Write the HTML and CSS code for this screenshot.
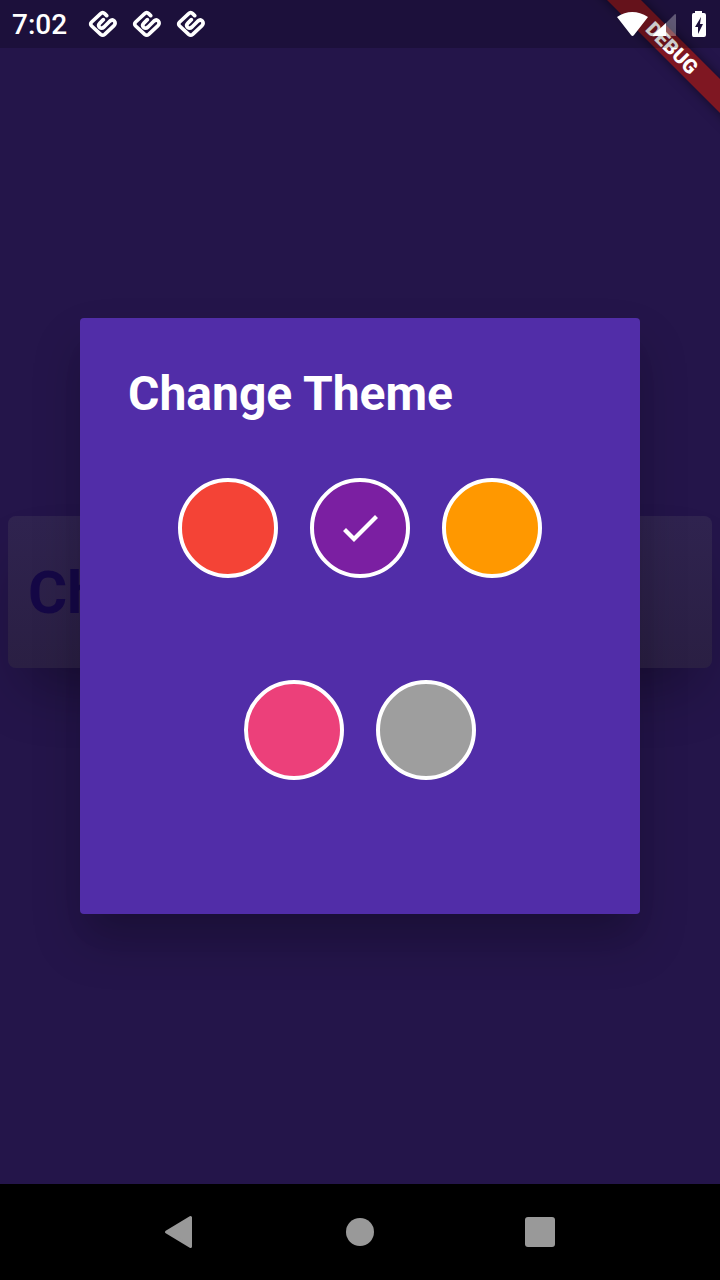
FILE: index.html
```html
<!DOCTYPE html>
<html lang="en">
<head>
<meta charset="utf-8">
<meta name="viewport" content="width=device-width, initial-scale=1">
<title>Change Theme</title>
<link rel="stylesheet" href="styles.css">
</head>
<body>
<svg class="symbols" aria-hidden="true">
  <symbol id="diamond" viewBox="0 0 90 84">
    <path d="M56 17 L50 11 Q44 5 38 11 L11 36 Q5 42 11 48 L38 73 Q44 78 50 73 L78 47 Q84 40 79 33 Q73 27 66 33 L48 51 Q41 57 35 52 Q29 46 35 40 L46 29" fill="none" stroke="#fff" stroke-width="11" stroke-linejoin="round" stroke-linecap="round"/>
  </symbol>
</svg>
<div class="screen">
  <main class="app">
    <section class="card"><h1 class="card-title">Change Theme</h1></section>
    <div class="debug-banner">DEBUG</div>
    <div class="overlay">
      <form class="dialog" role="dialog" aria-labelledby="dialog-title">
        <h2 class="dialog-title" id="dialog-title">Change Theme</h2>
        <div class="swatches">
          <input class="swatch red" type="radio" name="theme" aria-label="Red">
          <input class="swatch purple" type="radio" name="theme" aria-label="Purple" checked>
          <input class="swatch orange" type="radio" name="theme" aria-label="Orange">
          <input class="swatch pink" type="radio" name="theme" aria-label="Pink">
          <input class="swatch grey" type="radio" name="theme" aria-label="Grey">
        </div>
      </form>
    </div>
    <header class="status-bar">
      <span class="clock">7:02</span>
      <div class="notifications">
        <svg width="30" height="28"><use href="#diamond"/></svg>
        <svg width="30" height="28"><use href="#diamond"/></svg>
        <svg width="30" height="28"><use href="#diamond"/></svg>
      </div>
      <svg class="system" width="90" height="28" viewBox="0 0 90 28" fill="#fff" aria-hidden="true">
        <path d="M0 7 Q15 -3 31 7 L17 25 Q15.500 27 14 25 Z"/>
        <path d="M58 4 Q59 4 59 5 V26 H36 Z" fill-opacity=".3"/>
        <path d="M49 13 V26 H37 Q35 26 37 24 Z"/>
        <path fill-rule="evenodd" d="M78 1 H85 V3 H87 Q89 3 89 5 V25 Q89 27 87 27 H76.500 Q75 27 75 25 V5 Q75 3 76.500 3 H78 Z M84 7 L78 17 H81 V24 L86 14 H83 Z"/>
      </svg>
    </header>
  </main>
  <nav class="nav-bar">
    <button class="nav-button" aria-label="Back"><svg width="32" height="34" viewBox="0 0 32 34"><path d="M2.500 17 L26.500 2.500 V31.500 Z" fill="#999" stroke="#999" stroke-width="3" stroke-linejoin="round"/></svg></button>
    <button class="nav-button" aria-label="Home"><svg width="28" height="28"><circle cx="14" cy="14" r="14" fill="#999"/></svg></button>
    <button class="nav-button" aria-label="Recents"><svg width="30" height="30"><rect width="30" height="30" rx="3" fill="#999"/></svg></button>
  </nav>
</div>
</body>
</html>
```
FILE: styles.css
```css
* { box-sizing: border-box; }
body { margin: 0; background: #000; font-family: Roboto, "Liberation Sans", sans-serif; }
.symbols { display: none; }
.screen { display: flex; flex-direction: column; min-height: 100vh; }
.app { position: relative; flex: 1; display: grid; align-items: center; padding: 8px; background: #24154a; overflow: hidden; }
.card {
  min-height: 152px; display: flex; align-items: center; padding: 2px 20px 0; border-radius: 8px;
  background: linear-gradient(#2f234f, #2a1f43);
  box-shadow: 0 34px 60px -16px rgba(0,0,0,.3);
}
.card-title { margin: 0; font-size: 60px; line-height: 72px; font-weight: 700; color: #150846; white-space: nowrap; }
.overlay { position: absolute; inset: 0; display: flex; align-items: center; justify-content: center; padding: 48px 80px 0; }
.dialog {
  width: 100%; max-width: 560px; padding: 48px 48px 134px; border-radius: 4px; background: #512da8;
  box-shadow: 0 24px 30px -14px rgba(0,0,0,.1), 0 28px 50px rgba(0,0,0,.2);
}
.dialog-title { margin: 0 0 56px; font-size: 48px; line-height: 56px; font-weight: 700; color: #fff; }
.swatches { display: flex; flex-wrap: wrap; justify-content: center; gap: 102px 32px; }
.swatch {
  appearance: none; width: 100px; height: 100px; margin: 0; border: 4px solid #fff; border-radius: 50%;
  display: grid; place-items: center; cursor: pointer;
}
.swatch:checked::before {
  content: ""; width: 48px; height: 48px; background: #fff;
  clip-path: polygon(18px 32px, 10px 24px, 7px 27px, 18px 38px, 42px 14px, 39px 11px);
}
.red { background: #f44336; }
.purple { background: #7b1fa2; }
.orange { background: #ff9800; }
.pink { background: #ec407a; }
.grey { background: #9e9e9e; }
.debug-banner {
  position: absolute; top: 36px; right: -52px; width: 200px; height: 24px; transform: rotate(45deg);
  background: #7f1722; box-shadow: 0 0 12px rgba(0,0,0,.5);
  color: #fff; font-size: 20px; line-height: 24px; font-weight: 900; text-align: center;
}
.status-bar {
  position: absolute; top: 0; left: 0; right: 0; height: 48px; display: flex; align-items: center;
  padding: 0 13px 0 12px; background: rgba(0,0,0,.2); color: #fff;
}
.clock { font-size: 28px; line-height: 32px; font-weight: 500; margin: 2px 21px 0 0; }
.notifications { display: flex; gap: 14px; }
.system { margin-left: auto; }
.nav-bar { height: 96px; display: grid; grid-template-columns: repeat(3, 25%); justify-content: center; background: #000; }
.nav-button { display: grid; place-items: center; padding: 0; border: 0; background: none; cursor: pointer; }
```
